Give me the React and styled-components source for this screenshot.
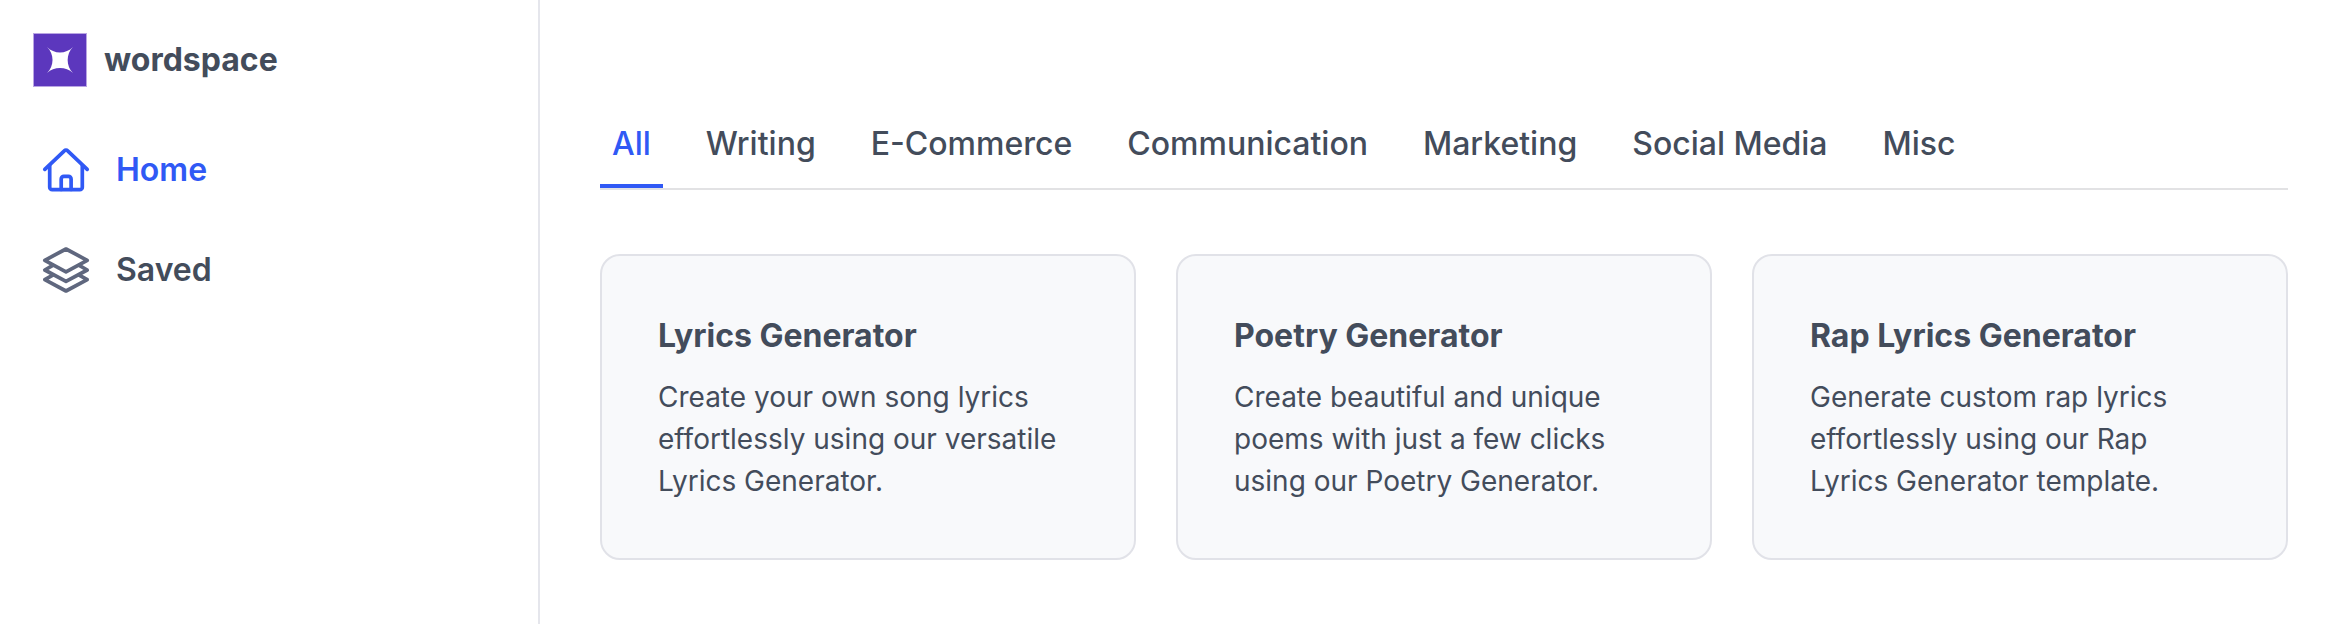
import React, { useState } from 'react';
import styled, { createGlobalStyle } from 'styled-components';

const TABS = ['All', 'Writing', 'E-Commerce', 'Communication', 'Marketing', 'Social Media', 'Misc'];

const TEMPLATES = [
  {
    title: 'Lyrics Generator',
    text: 'Create your own song lyrics effortlessly using our versatile Lyrics Generator.',
  },
  {
    title: 'Poetry Generator',
    text: 'Create beautiful and unique poems with just a few clicks using our Poetry Generator.',
  },
  {
    title: 'Rap Lyrics Generator',
    text: 'Generate custom rap lyrics effortlessly using our Rap Lyrics Generator template.',
  },
];

const HomeIcon = () => (
  <Icon viewBox="0 0 48 48" aria-hidden="true">
    <path d="M2.8 23.4 22.3 4.8a2.4 2.4 0 0 1 3.4 0L45.2 23.4" />
    <path d="M7.7 19.5v21.7a2.5 2.5 0 0 0 2.5 2.5h27.6a2.5 2.5 0 0 0 2.5-2.5V19.5" />
    <path d="M19.2 43.5V33a2.6 2.6 0 0 1 2.6-2.6h4.7a2.6 2.6 0 0 1 2.6 2.6v10.5" />
  </Icon>
);

const LayersIcon = () => (
  <Icon viewBox="0 0 48 48" aria-hidden="true">
    <path d="M24 3 45.2 14.3 24 25.8 2.8 14.3Z" />
    <path d="M10.8 19.4 2.8 24 24 35.3 45.2 24l-8-4.6" />
    <path d="M10.8 29.1 2.8 33.7 24 45l21.2-11.3-8-4.6" />
  </Icon>
);

const App = () => {
  const [tab, setTab] = useState('All');

  return (
    <Layout>
      <GlobalStyle />
      <Sidebar>
        <Brand href="#">
          <Logo viewBox="0 0 54 54" aria-hidden="true">
            <rect width="54" height="54" fill="#b9a5e3" />
            <rect x="1" y="1" width="52" height="52" fill="#5c37bd" />
            <path
              d="M14 14C21 21.3 33 21.3 40 14C32.9 21 32.9 33 40 40C33 33.3 21 33.3 14 40C21.4 33 21.4 21 14 14Z"
              fill="#fff"
            />
          </Logo>
          wordspace
        </Brand>
        <Nav>
          <NavLink href="#home" $active>
            <HomeIcon />
            Home
          </NavLink>
          <NavLink href="#saved">
            <LayersIcon />
            Saved
          </NavLink>
        </Nav>
      </Sidebar>
      <Main>
        <TabBar role="tablist">
          {TABS.map((name) => (
            <Tab
              key={name}
              role="tab"
              aria-selected={tab === name}
              $active={tab === name}
              onClick={() => setTab(name)}
            >
              {name}
            </Tab>
          ))}
        </TabBar>
        <CardGrid>
          {TEMPLATES.map(({ title, text }) => (
            <Card key={title}>
              <CardTitle>{title}</CardTitle>
              <CardText>{text}</CardText>
            </Card>
          ))}
        </CardGrid>
      </Main>
    </Layout>
  );
};

const GlobalStyle = createGlobalStyle`
  * {
    box-sizing: border-box;
  }
  body {
    margin: 0;
    background: #fff;
    color: #434c5b;
    font-family: Inter, "Liberation Sans", sans-serif;
    font-size: 32px;
    line-height: 48px;
  }
`;

const Layout = styled.div`
  display: flex;
  min-height: 100vh;
`;

const Sidebar = styled.aside`
  flex: 0 0 540px;
  padding: 33px;
  border-right: 2px solid #e5e6ec;
`;

const Brand = styled.a`
  display: flex;
  align-items: center;
  gap: 17px;
  color: inherit;
  font-weight: 700;
  text-decoration: none;
`;

const Logo = styled.svg`
  width: 54px;
  height: 54px;
`;

const Nav = styled.nav`
  display: flex;
  flex-direction: column;
  gap: 52px;
  margin-top: 59px;
  padding-left: 9px;
`;

const Icon = styled.svg`
  width: 48px;
  height: 48px;
  fill: none;
  stroke: currentColor;
  stroke-width: 3.7;
  stroke-linecap: round;
  stroke-linejoin: round;
`;

const NavLink = styled.a`
  display: flex;
  align-items: center;
  gap: 26px;
  color: ${({ $active }) => ($active ? '#3059f5' : '#434c5b')};
  font-weight: 600;
  text-decoration: none;

  ${Icon} {
    color: ${({ $active }) => ($active ? '#3059f5' : '#5f677e')};
  }
`;

const Main = styled.main`
  flex: 1;
  min-width: 0;
  padding: 104px 50px 64px 60px;
`;

const TabBar = styled.div`
  display: flex;
  gap: 31px;
  border-bottom: 2px solid #e2e2e4;
`;

const Tab = styled.button`
  padding: 16px 12px;
  border: 0;
  border-bottom: 4px solid ${({ $active }) => ($active ? '#3059f5' : 'transparent')};
  background: none;
  color: ${({ $active }) => ($active ? '#3059f5' : 'inherit')};
  font: inherit;
  font-weight: 500;
  white-space: nowrap;
  cursor: pointer;
`;

const CardGrid = styled.div`
  display: grid;
  grid-template-columns: repeat(3, 1fr);
  gap: 40px;
  margin-top: 64px;
`;

const Card = styled.article`
  padding: 56px;
  border: 2px solid #e1e2e8;
  border-radius: 20px;
  background: #f8f9fb;
`;

const CardTitle = styled.h2`
  margin: 0 0 16px;
  font-size: 32px;
  font-weight: 700;
`;

const CardText = styled.p`
  margin: 0;
  font-size: 28px;
  line-height: 42px;
`;

export default App;
